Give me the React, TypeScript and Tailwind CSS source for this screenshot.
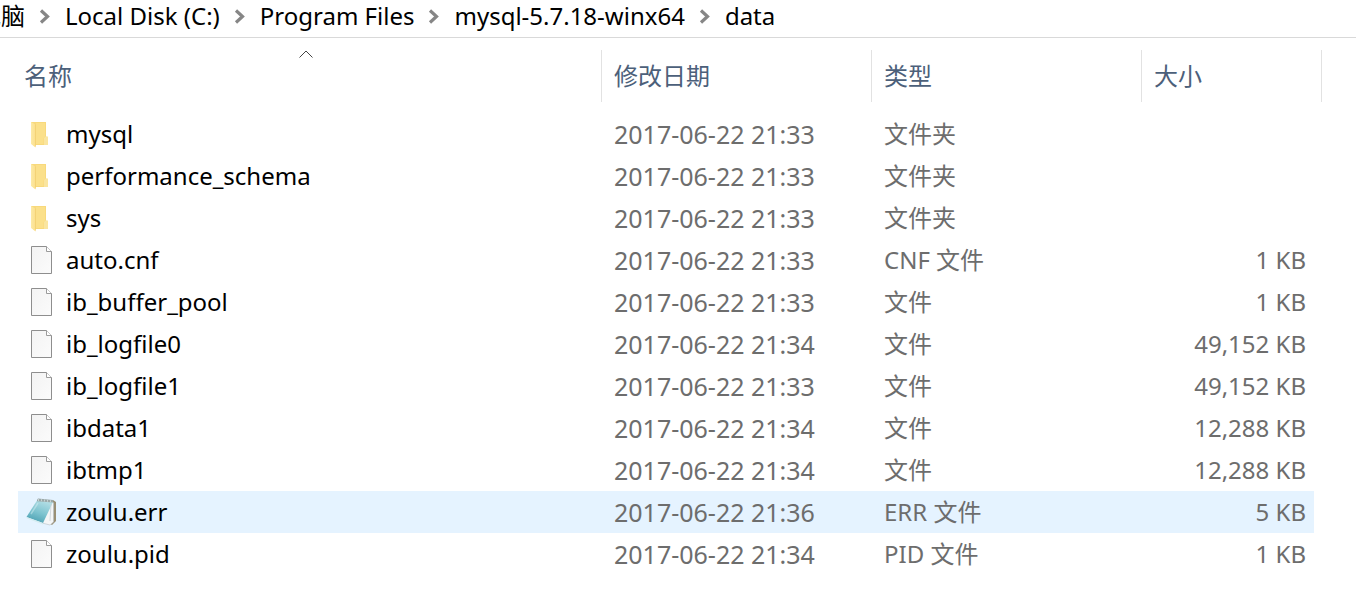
type Kind = "folder" | "file" | "log";

interface Entry {
  name: string;
  kind: Kind;
  modified: string;
  type: string;
  size?: string;
  selected?: boolean;
}

const entries: Entry[] = [
  { name: "mysql", kind: "folder", modified: "2017-06-22 21:33", type: "文件夹" },
  { name: "performance_schema", kind: "folder", modified: "2017-06-22 21:33", type: "文件夹" },
  { name: "sys", kind: "folder", modified: "2017-06-22 21:33", type: "文件夹" },
  { name: "auto.cnf", kind: "file", modified: "2017-06-22 21:33", type: "CNF 文件", size: "1 KB" },
  { name: "ib_buffer_pool", kind: "file", modified: "2017-06-22 21:33", type: "文件", size: "1 KB" },
  { name: "ib_logfile0", kind: "file", modified: "2017-06-22 21:34", type: "文件", size: "49,152 KB" },
  { name: "ib_logfile1", kind: "file", modified: "2017-06-22 21:33", type: "文件", size: "49,152 KB" },
  { name: "ibdata1", kind: "file", modified: "2017-06-22 21:34", type: "文件", size: "12,288 KB" },
  { name: "ibtmp1", kind: "file", modified: "2017-06-22 21:34", type: "文件", size: "12,288 KB" },
  { name: "zoulu.err", kind: "log", modified: "2017-06-22 21:36", type: "ERR 文件", size: "5 KB", selected: true },
  { name: "zoulu.pid", kind: "file", modified: "2017-06-22 21:34", type: "PID 文件", size: "1 KB" },
];

const crumbs = ["Local Disk (C:)", "Program Files", "mysql-5.7.18-winx64", "data"];

function FolderIcon() {
  return (
    <svg className="h-8 w-8 shrink-0" viewBox="0 0 32 32" aria-hidden="true">
      <defs>
        <linearGradient id="folder-front" x1="0" x2="1">
          <stop offset="0" stopColor="#fdeaa6" />
          <stop offset="1" stopColor="#fbdf8c" />
        </linearGradient>
      </defs>
      <path d="M5 4h15v14.5l2 1V27H9L5 25z" fill="#f8d97c" />
      <path d="M10 5h9v13.500l-1.500 2V26H10z" fill="#fbe08a" />
      <path d="M18 20l1.500-1.500h2.500V27h-4z" fill="#fae59f" />
      <path d="M5 4l4.500 2.500V29.500L5 26z" fill="url(#folder-front)" />
      <path d="M9.500 6.500v22" stroke="#f0cd70" strokeWidth=".7" />
    </svg>
  );
}

function FileIcon() {
  return (
    <svg className="h-8 w-8 shrink-0" viewBox="0 0 32 32" aria-hidden="true">
      <defs>
        <linearGradient id="page" x1="0" x2="1" y1="0" y2="1">
          <stop offset="0" stopColor="#f3f3f3" />
          <stop offset="1" stopColor="#fbfbfb" />
        </linearGradient>
      </defs>
      <path d="M5.500 2.500h15l5 5v22h-20z" fill="url(#page)" stroke="#8e8e8e" />
      <path d="M20.500 2.500v5h5" fill="#fff" stroke="#9b9b9b" />
    </svg>
  );
}

function NotepadIcon() {
  return (
    <svg className="h-8 w-8 shrink-0" viewBox="0 0 32 32" aria-hidden="true">
      <defs>
        <linearGradient id="cover" x1=".7" x2=".3" y1="0" y2="1">
          <stop offset="0" stopColor="#b5dfe6" />
          <stop offset=".55" stopColor="#7cc3cf" />
          <stop offset="1" stopColor="#4b9fb1" />
        </linearGradient>
      </defs>
      <path d="M27 4l3 2v19l-4 4-3-2z" fill="#998f74" />
      <path d="M26 5l1.500 2v19L24 29l-8-2z" fill="#f4f6f7" stroke="#b7bfc4" strokeWidth=".6" />
      <path d="M11 4.500L27 6 17 27 .5 21z" fill="url(#cover)" />
      <path d="M.5 21L17 27v1.500L1 22.500z" fill="#d6edf1" />
      <path d="M25 8l-1 17" stroke="#c9d1d5" strokeWidth=".8" />
      <path d="M11 4l1-1.500 15 1.500v2.500L11 5.200z" fill="#9aa8a8" />
      <path d="M12.500 3v2M15.500 3.200v2M18.500 3.500v2M21.500 3.800v2M24.500 4.200v2" stroke="#d3dddd" strokeWidth=".8" />
      <path d="M12 7L5 18" stroke="#d4eef2" strokeOpacity=".5" strokeWidth="1.500" />
    </svg>
  );
}

function EntryIcon({ kind }: { kind: Kind }) {
  if (kind === "folder") return <FolderIcon />;
  if (kind === "log") return <NotepadIcon />;
  return <FileIcon />;
}

function Separator() {
  return (
    <svg className="h-4 w-3 shrink-0" viewBox="0 0 12 16" fill="none" aria-hidden="true">
      <path d="M2 2.500L8.500 8.500 2 14.500" stroke="#868686" strokeWidth="3.200" />
    </svg>
  );
}

const divider = "border-r border-[#e2e2e2]";
const heading = "flex h-[52px] w-full items-center text-left font-normal text-[#4c607a]";

export default function App() {
  return (
    <div className="min-h-screen bg-white font-['Noto_Sans','Noto_Sans_CJK_SC',sans-serif] text-2xl text-black">
      <nav aria-label="路径" className="border-b border-[#d9d9d9] pb-[5px]">
        <ol className="flex items-center gap-[14px] leading-8 whitespace-nowrap">
          <li className="flex w-[25px] justify-end overflow-hidden">
            <a href="#pc">此电脑</a>
          </li>
          {crumbs.map((crumb) => (
            <li key={crumb} className="flex items-center gap-[14px]">
              <Separator />
              <a href="#folder">{crumb}</a>
            </li>
          ))}
        </ol>
      </nav>

      <main className="pt-3 pr-[34px] pl-[18px]">
        <table className="w-full table-fixed border-separate border-spacing-0 whitespace-nowrap">
          <colgroup>
            <col />
            <col className="w-[270px]" />
            <col className="w-[270px]" />
            <col className="w-[172px]" />
            <col className="w-2" />
          </colgroup>
          <thead>
            <tr>
              <th scope="col" aria-sort="ascending" className={`relative p-0 ${divider}`}>
                <button type="button" className={`${heading} pl-[6px]`}>名称</button>
                <svg className="absolute inset-x-0 top-0 mx-auto h-2 w-[22px] pr-2" viewBox="0 0 14 8" fill="none" aria-hidden="true">
                  <path d="M.5 7.500L7 1l6.500 6.500" stroke="#444" />
                </svg>
              </th>
              <th scope="col" className={`p-0 ${divider}`}>
                <button type="button" className={`${heading} pl-3`}>修改日期</button>
              </th>
              <th scope="col" className={`p-0 ${divider}`}>
                <button type="button" className={`${heading} pl-3`}>类型</button>
              </th>
              <th scope="col" colSpan={2} className={`p-0 ${divider}`}>
                <button type="button" className={`${heading} pl-3`}>大小</button>
              </th>
            </tr>
            <tr aria-hidden="true">
              <td colSpan={5} className="h-[11px] p-0" />
            </tr>
          </thead>
          <tbody className="leading-8 text-[#6d6d6d]">
            {entries.map((entry) => {
              const cell = entry.selected ? "h-[42px] p-0 bg-[#e5f3ff]" : "h-[42px] p-0";
              return (
                <tr key={entry.name} aria-selected={entry.selected ?? false}>
                  <td className={cell}>
                    <div className="flex items-center gap-2 pl-2 text-black">
                      <EntryIcon kind={entry.kind} />
                      <span>{entry.name}</span>
                    </div>
                  </td>
                  <td className={`${cell} pl-3 text-[25px]`}>{entry.modified}</td>
                  <td className={`${cell} pl-3`}>{entry.type}</td>
                  <td className={`${cell} pr-2 text-right`}>{entry.size}</td>
                  <td className="p-0" />
                </tr>
              );
            })}
          </tbody>
        </table>
      </main>
    </div>
  );
}
